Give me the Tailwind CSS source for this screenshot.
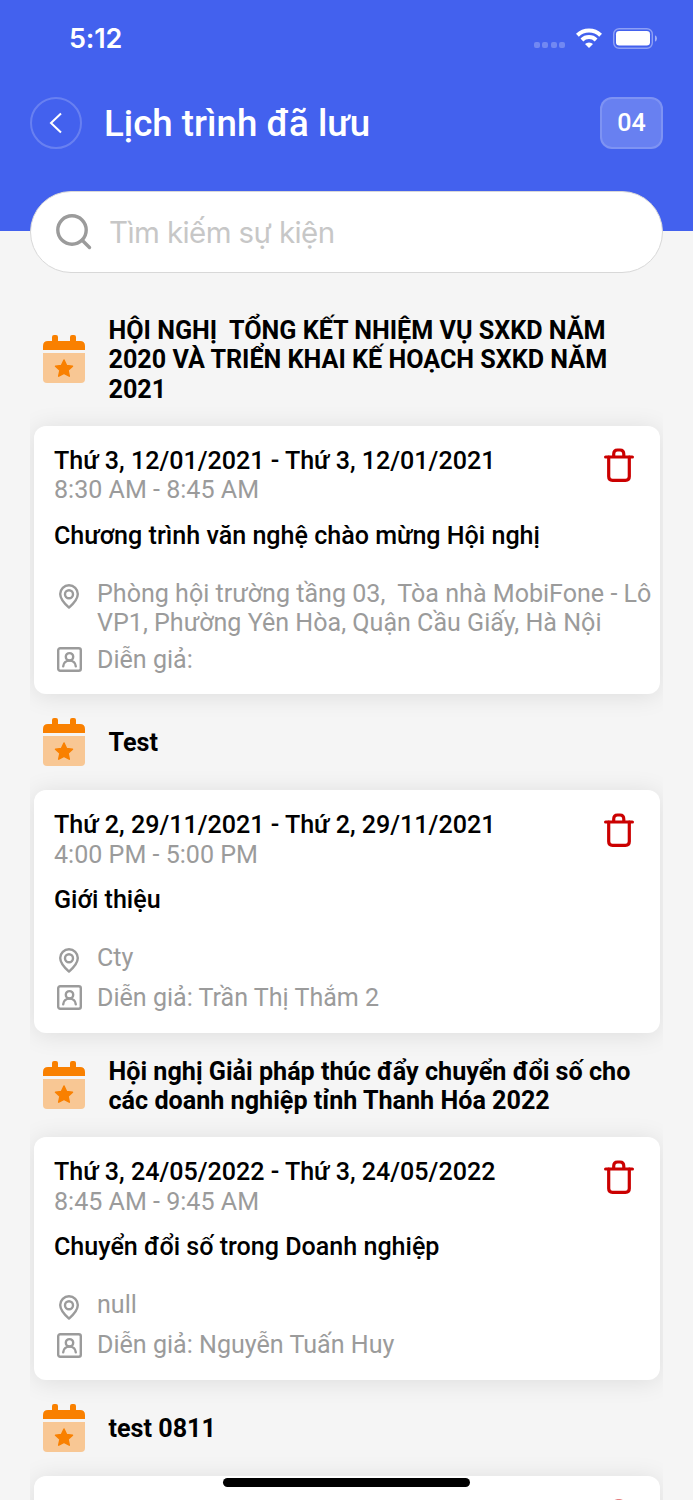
<!DOCTYPE html>
<html lang="vi">
<head>
	<meta charset="UTF-8">
	<meta name="viewport" content="width=device-width, initial-scale=1.0">
	<title>Lịch trình đã lưu</title>
	<script src="https://cdn.jsdelivr.net/npm/@tailwindcss/browser@4"></script>
</head>
<body class="bg-[#f5f5f5] font-[Roboto,sans-serif] text-[25.08px] leading-[29.57px] text-black">

<!-- Icons -->
<svg class="hidden">
	<symbol id="calendar" viewBox="0 0 42 48">
		<path fill="#f98000" d="M0 15V11Q0 6 5 6H9V2Q9 0 11 0H13Q15 0 15 2V6H27V2Q27 0 29 0H31Q33 0 33 2V6H37Q42 6 42 11V15Z"/>
		<path fill="#f8c794" d="M0 18H42V44Q42 48 38 48H4Q0 48 0 44Z"/>
		<path fill="#f98000" stroke="#f98000" stroke-width="1.5" stroke-linejoin="round" d="M21 25L23.6 30.5L29.5 31.2L25.1 35.3L26.3 41.2L21 38.3L15.7 41.2L16.9 35.3L12.5 31.2L18.4 30.5Z"/>
	</symbol>
	<symbol id="trash" viewBox="0 0 30 34">
		<g fill="none" stroke="#cb0000" stroke-width="3.2" stroke-linecap="round" stroke-linejoin="round">
			<path d="M1.6 9H28.4"/>
			<path d="M4.7 9V28.5Q4.7 32.3 8.5 32.3H21.5Q25.3 32.3 25.3 28.5V9"/>
			<path d="M9.7 8V6.3Q9.7 2 13.5 2H16Q19.8 2 19.8 6.3V8"/>
		</g>
	</symbol>
	<symbol id="pin" viewBox="0 0 20 25">
		<g fill="none" stroke="#9b9b9b" stroke-width="2.4" stroke-linejoin="round">
			<path d="M10 23.6C6.5 20.5 1.2 15.6 1.2 10A8.8 8.8 0 0 1 18.8 10C18.8 15.6 13.5 20.5 10 23.6Z"/>
			<circle cx="10" cy="10.2" r="4"/>
		</g>
	</symbol>
	<symbol id="speaker" viewBox="0 0 25 25">
		<g fill="none" stroke="#9b9b9b" stroke-width="2.4" stroke-linecap="round">
			<rect x="1.2" y="1.2" width="22.6" height="22.6" rx="2"/>
			<circle cx="12.5" cy="9.8" r="3.7"/>
			<path d="M6.2 19.3C6.5 16 9 13.6 12.5 13.6S18.5 16 18.8 19.3"/>
		</g>
	</symbol>
</svg>

<div class="relative h-[1500px] overflow-hidden">

	<header class="h-[231px] bg-[#4361ee] text-white">
		<div class="flex h-[76px] items-center justify-between pl-[69px] pr-9">
			<span class="mt-px font-[Inter,sans-serif] text-[27px] font-semibold tracking-[-0.2px]">5:12</span>
			<div class="flex items-center">
				<div class="mt-[14px] mr-[10px] flex gap-[2.4px]">
					<i class="size-[6px] rounded-[2px] bg-white/25"></i>
					<i class="size-[6px] rounded-[2px] bg-white/25"></i>
					<i class="size-[6px] rounded-[2px] bg-white/25"></i>
					<i class="size-[6px] rounded-[2px] bg-white/25"></i>
				</div>
				<svg class="mr-[10px] h-[20px] w-[28px]" viewBox="0 0 28 20">
					<g fill="none" stroke="#fff" stroke-width="4">
						<path d="M2.4 7.2A16.6 16.6 0 0 1 25.6 7.2"/>
						<path d="M6.9 12A10.2 10.2 0 0 1 21.1 12"/>
					</g>
					<path fill="#fff" d="M14 20L10 16A5.8 5.8 0 0 1 18 16Z"/>
				</svg>
				<svg class="h-[21px] w-[44px]" viewBox="0 0 44 21">
					<rect x=".7" y=".7" width="38.6" height="19.6" rx="5.5" fill="none" stroke="#fff" stroke-opacity=".4" stroke-width="1.4"/>
					<rect x="3" y="3" width="34" height="14.5" rx="3.3" fill="#fff"/>
					<path fill="#fff" fill-opacity=".5" d="M42 7.2Q44 8.3 44 10.5T42 13.8Z"/>
				</svg>
			</div>
		</div>
		<div class="flex items-center px-[30px] pt-[21px]">
			<button class="flex size-[52px] items-center justify-center rounded-full border-2 border-white/20">
				<svg class="h-[22px] w-[14px]" viewBox="0 0 14 22"><path d="M12 1.5L2 11L12 20.5" fill="none" stroke="#fff" stroke-width="2"/></svg>
			</button>
			<h1 class="mt-px ml-[22px] text-[36.7px] leading-[44px] font-medium">Lịch trình đã lưu</h1>
			<div class="ml-auto flex h-[52px] w-[63px] items-center justify-center rounded-xl border-2 border-white/15 bg-white/20 font-medium">04</div>
		</div>
	</header>

	<div class="relative mx-[30px] -mt-10 flex h-[82px] items-center rounded-full border-[1.5px] border-[#d8d8d8] bg-white pl-[25px]">
		<svg class="h-[36px] w-[36px]" viewBox="0 0 36 36">
			<g fill="none" stroke="#9b9b9b" stroke-width="3.4" stroke-linecap="round">
				<circle cx="16" cy="16" r="14.2"/>
				<path d="M26.2 26.2L33.5 33.5"/>
			</g>
		</svg>
		<span class="-mt-px ml-[17px] font-[Inter,sans-serif] text-[29.5px] leading-9 tracking-[-0.6px] text-[#c7c7c7]">Tìm kiếm sự kiện</span>
	</div>

	<main class="mx-[30px] mt-[19px] overflow-x-clip px-[3.5px]">

		<section>
			<div class="flex min-h-24 items-center gap-6 py-[21.5px] pl-[9px]">
				<svg class="h-12 w-[42px] shrink-0"><use href="#calendar"/></svg>
				<h2 class="pt-[2px] text-[25.15px] font-bold whitespace-pre">HỘI NGHỊ  TỔNG KẾT NHIỆM VỤ SXKD NĂM
2020 VÀ TRIỂN KHAI KẾ HOẠCH SXKD NĂM
2021</h2>
			</div>
			<article class="rounded-xl bg-white py-5 pl-[20.5px] shadow-[0_2px_24px_rgba(0,0,0,0.1)]">
				<div class="flex items-start justify-between pr-[26px]">
					<div>
						<p class="font-medium">Thứ 3, 12/01/2021 - Thứ 3, 12/01/2021</p>
						<p class="text-[#9b9b9b]">8:30 AM - 8:45 AM</p>
					</div>
					<svg class="mt-[2.5px] h-[34px] w-[30px]"><use href="#trash"/></svg>
				</div>
				<h3 class="mt-[15.7px] mb-[28.6px] font-medium">Chương trình văn nghệ chào mừng Hội nghị</h3>
				<div class="mb-[7px] flex min-h-[33px] text-[#9b9b9b]">
					<svg class="mt-[5px] mr-[18px] ml-[5px] h-[25px] w-[20px] shrink-0"><use href="#pin"/></svg>
					<p class="whitespace-pre">Phòng hội trường tầng 03,  Tòa nhà MobiFone - Lô
VP1, Phường Yên Hòa, Quận Cầu Giấy, Hà Nội</p>
				</div>
				<div class="flex items-center text-[#9b9b9b]">
					<svg class="mr-[15.5px] ml-[2.5px] size-[25px] shrink-0"><use href="#speaker"/></svg>
					<p>Diễn giả:</p>
				</div>
			</article>
		</section>

		<section>
			<div class="flex min-h-24 items-center gap-6 py-[21.5px] pl-[9px]">
				<svg class="h-12 w-[42px] shrink-0"><use href="#calendar"/></svg>
				<h2 class="pt-px text-[25.15px] font-bold">Test</h2>
			</div>
			<article class="rounded-xl bg-white py-5 pl-[20.5px] shadow-[0_2px_24px_rgba(0,0,0,0.1)]">
				<div class="flex items-start justify-between pr-[26px]">
					<div>
						<p class="font-medium">Thứ 2, 29/11/2021 - Thứ 2, 29/11/2021</p>
						<p class="text-[#9b9b9b]">4:00 PM - 5:00 PM</p>
					</div>
					<svg class="mt-[2.5px] h-[34px] w-[30px]"><use href="#trash"/></svg>
				</div>
				<h3 class="mt-[15.4px] mb-[28.3px] font-medium">Giới thiệu</h3>
				<div class="mb-[7px] flex min-h-[33px] text-[#9b9b9b]">
					<svg class="mt-[5px] mr-[18px] ml-[5px] h-[25px] w-[20px] shrink-0"><use href="#pin"/></svg>
					<p>Cty</p>
				</div>
				<div class="flex items-center pb-[0.6px] text-[#9b9b9b]">
					<svg class="mr-[15.5px] ml-[2.5px] size-[25px] shrink-0"><use href="#speaker"/></svg>
					<p>Diễn giả: Trần Thị Thắm 2</p>
				</div>
			</article>
		</section>

		<section>
			<div class="flex min-h-24 items-center gap-6 py-[21.7px] pl-[9px]">
				<svg class="h-12 w-[42px] shrink-0"><use href="#calendar"/></svg>
				<h2 class="pt-[2px] text-[25.15px] font-bold whitespace-pre">Hội nghị Giải pháp thúc đẩy chuyển đổi số cho
các doanh nghiệp tỉnh Thanh Hóa 2022</h2>
			</div>
			<article class="rounded-xl bg-white py-5 pl-[20.5px] shadow-[0_2px_24px_rgba(0,0,0,0.1)]">
				<div class="flex items-start justify-between pr-[26px]">
					<div>
						<p class="font-medium">Thứ 3, 24/05/2022 - Thứ 3, 24/05/2022</p>
						<p class="text-[#9b9b9b]">8:45 AM - 9:45 AM</p>
					</div>
					<svg class="mt-[2.5px] h-[34px] w-[30px]"><use href="#trash"/></svg>
				</div>
				<h3 class="mt-[15.7px] mb-[28.7px] font-medium">Chuyển đổi số trong Doanh nghiệp</h3>
				<div class="mb-[7px] flex min-h-[33px] text-[#9b9b9b]">
					<svg class="mt-[5px] mr-[18px] ml-[5px] h-[25px] w-[20px] shrink-0"><use href="#pin"/></svg>
					<p>null</p>
				</div>
				<div class="flex items-center text-[#9b9b9b]">
					<svg class="mr-[15.5px] ml-[2.5px] size-[25px] shrink-0"><use href="#speaker"/></svg>
					<p>Diễn giả: Nguyễn Tuấn Huy</p>
				</div>
			</article>
		</section>

		<section>
			<div class="flex min-h-24 items-center gap-6 py-[21.5px] pl-[9px]">
				<svg class="h-12 w-[42px] shrink-0"><use href="#calendar"/></svg>
				<h2 class="pt-px text-[25.15px] font-bold">test 0811</h2>
			</div>
			<article class="flex h-60 items-start justify-end rounded-xl bg-white py-5 pr-[26px] shadow-[0_2px_24px_rgba(0,0,0,0.1)]">
				<svg class="mt-[2.5px] h-[34px] w-[30px]"><use href="#trash"/></svg>
			</article>
		</section>
	</main>

	<!-- Home indicator -->
	<div class="absolute bottom-[13px] left-[223px] h-[9px] w-[247px] rounded-full bg-black"></div>
</div>
</body>
</html>
